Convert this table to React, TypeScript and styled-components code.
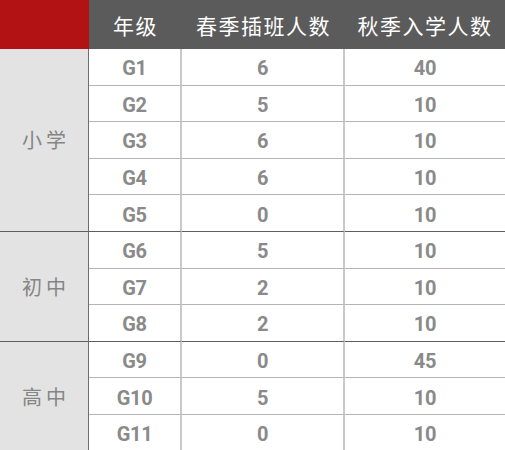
import React from 'react'
import styled, { createGlobalStyle } from 'styled-components'

const GlobalStyle = createGlobalStyle`
  html, body {
    margin: 0;
    padding: 0;
    background: #ffffff;
  }
  body {
    font-family: "Noto Sans CJK SC", "Noto Sans", sans-serif;
  }
`

type Group = { name: string; rows: [string, number, number][] }

const groups: Group[] = [
  {
    name: '小学',
    rows: [
      ['G1', 6, 40],
      ['G2', 5, 10],
      ['G3', 6, 10],
      ['G4', 6, 10],
      ['G5', 0, 10],
    ],
  },
  {
    name: '初中',
    rows: [
      ['G6', 5, 10],
      ['G7', 2, 10],
      ['G8', 2, 10],
    ],
  },
  {
    name: '高中',
    rows: [
      ['G9', 0, 45],
      ['G10', 5, 10],
      ['G11', 0, 10],
    ],
  },
]

const App = () => {
  return (
    <>
      <GlobalStyle />
      <Table>
        <Corner />
        <HeadCell>年级</HeadCell>
        <HeadCell>春季插班人数</HeadCell>
        <HeadCell>秋季入学人数</HeadCell>
        {groups.map((g) => (
          <React.Fragment key={g.name}>
            <GroupCell $span={g.rows.length}>{g.name}</GroupCell>
            {g.rows.map(([grade, spring, fall], i) => {
              const last = i === g.rows.length - 1
              return (
                <React.Fragment key={grade}>
                  <DataCell $last={last} $divider>{grade}</DataCell>
                  <DataCell $last={last} $divider>{spring}</DataCell>
                  <DataCell $last={last}>{fall}</DataCell>
                </React.Fragment>
              )
            })}
          </React.Fragment>
        ))}
      </Table>
    </>
  )
}

const Table = styled.div`
  display: grid;
  width: 505px;
  grid-template-columns: 89px 93px 163px 160px;
  grid-template-rows: 49px repeat(11, 36.6px);
  overflow: hidden;
`

const Corner = styled.div`
  background-color: #b31215;
`

const HeadCell = styled.div`
  background-color: #5b5b5b;
  color: #ffffff;
  font-family: "Noto Sans CJK SC", "Noto Sans", sans-serif;
  font-size: 21px;
  letter-spacing: 1.5px;
  display: flex;
  align-items: center;
  justify-content: center;
  padding-top: 1px;
`

const GroupCell = styled.div<{ $span: number }>`
  grid-row: span ${(p) => p.$span};
  background-color: #e3e3e3;
  color: #858585;
  font-family: "Noto Sans CJK SC", "Noto Sans", sans-serif;
  font-size: 20px;
  letter-spacing: 4px;
  padding-left: 4px;
  display: flex;
  align-items: center;
  justify-content: center;
  border-bottom: 1px solid #5e5e5e;
  border-right: 1px solid #6e6e6e;
`

const DataCell = styled.div<{ $last: boolean; $divider?: boolean }>`
  display: flex;
  align-items: center;
  justify-content: center;
  padding-top: 3px;
  box-sizing: border-box;
  color: #8a8a8a;
  font-family: Roboto, "Open Sans", sans-serif;
  font-weight: 700;
  font-size: 20px;
  letter-spacing: -0.3px;
  border-bottom: 1px solid ${(p) => (p.$last ? '#5e5e5e' : '#b4b4b4')};
  border-right: ${(p) => (p.$divider ? '2px solid #c9c9c9' : 'none')};
`

export default App
